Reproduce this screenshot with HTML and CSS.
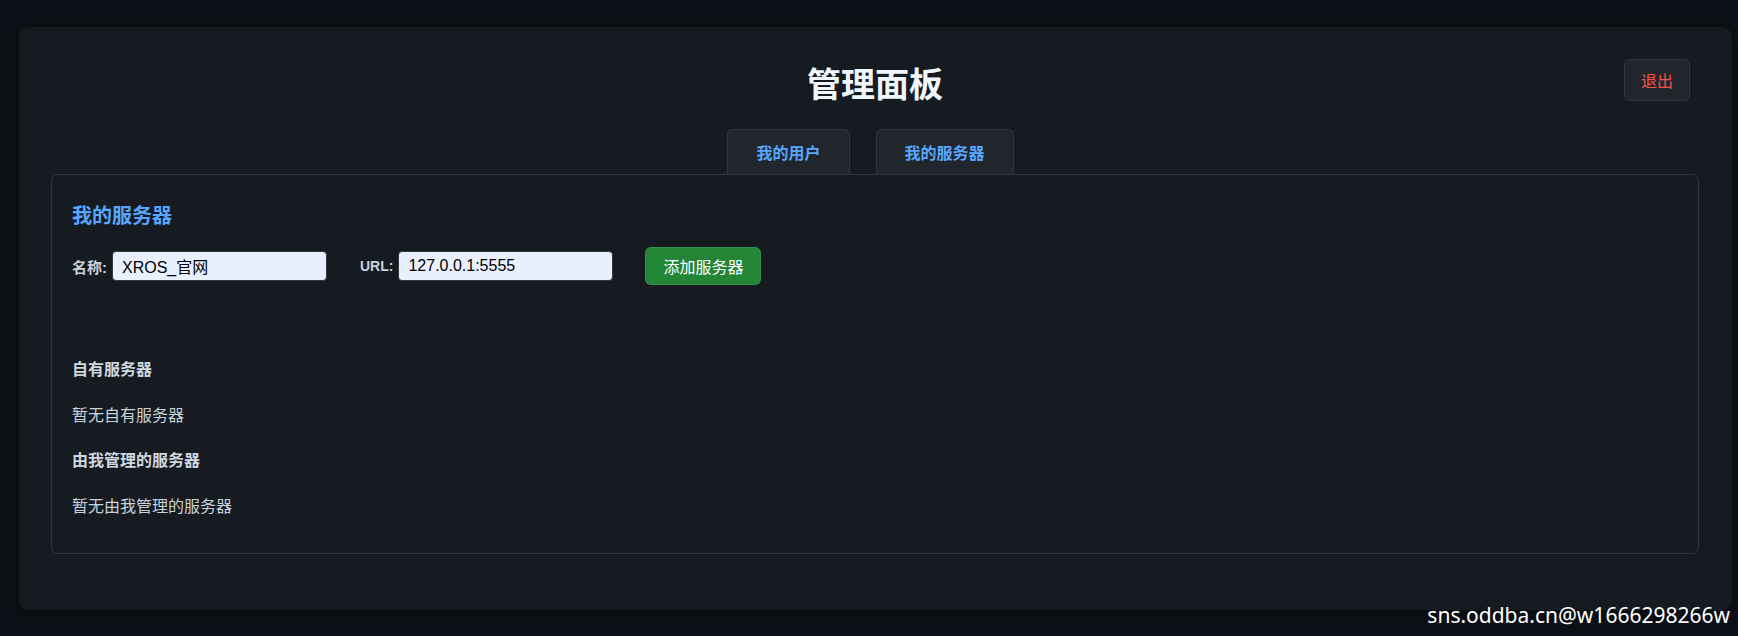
FILE: index.html
```html
<!DOCTYPE html>
<html lang="zh-CN">
<head>
<meta charset="utf-8">
<title>管理面板</title>
<link rel="stylesheet" href="styles.css">
</head>
<body>
<div class="card">
  <header class="header">
    <div class="spacer"></div>
    <h1 class="title">管理面板</h1>
    <button class="logout">退出</button>
  </header>
  <nav class="tabs">
    <button class="tab">我的用户</button>
    <button class="tab">我的服务器</button>
  </nav>
  <section class="panel">
    <h3 class="panel-title">我的服务器</h3>
    <div class="form-row">
      <label class="field"><span class="label">名称:</span><input class="input" value="XROS_官网"></label>
      <label class="field"><span class="label label-latin">URL:</span><input class="input" value="127.0.0.1:5555"></label>
      <button class="add-btn">添加服务器</button>
    </div>
    <div class="subhead first">自有服务器</div>
    <p class="empty">暂无自有服务器</p>
    <div class="subhead">由我管理的服务器</div>
    <p class="empty">暂无由我管理的服务器</p>
  </section>
</div>
<div class="watermark">sns.oddba.cn@w1666298266w</div>
</body>
</html>
```
FILE: styles.css
```css
html, body {
  margin: 0;
  padding: 0;
}
body {
  background: #0d1117;
  font-family: "Liberation Sans", "Noto Sans CJK SC", sans-serif;
  color: #c9d1d9;
  padding-top: 27px;
  height: 636px;
  box-sizing: border-box;
  overflow: hidden;
}
.card {
  margin: 0 6px 0 19px;
  padding: 32px 33px 56px 32px;
  background: #161b22;
  border-radius: 10px;
  box-shadow: 0 4px 16px rgba(0, 0, 0, 0.35);
}
.header {
  display: grid;
  grid-template-columns: 1fr auto 1fr;
  align-items: start;
  height: 42px;
}
.title {
  margin: 3px 0 0 0;
  font-size: 34px;
  line-height: 42px;
  font-weight: 700;
  color: #f0f6fc;
  font-family: "Noto Sans CJK SC", sans-serif;
}
.logout {
  justify-self: end;
  margin-right: 9px;
  height: 42px;
  padding: 0 16px;
  background: #21262d;
  border: 1px solid #30363d;
  border-radius: 6px;
  color: #f85149;
  font-size: 16px;
  font-family: "Noto Sans CJK SC", sans-serif;
  line-height: 40px;
}
.tabs {
  display: flex;
  justify-content: center;
  gap: 26px;
  margin-top: 28px;
  padding-right: 9px;
}
.tab {
  height: 45px;
  padding: 0 28px;
  background: #21262d;
  border: 1px solid #30363d;
  border-bottom: none;
  border-radius: 6px 6px 0 0;
  color: #58a6ff;
  font-size: 16px;
  font-weight: 700;
  font-family: "Noto Sans CJK SC", sans-serif;
  line-height: 44px;
}
.panel {
  border: 1px solid #30363d;
  border-radius: 6px;
  padding: 27px 20px 34px 20px;
}
.panel-title {
  margin: 0;
  font-size: 20px;
  line-height: 28px;
  font-weight: 700;
  color: #58a6ff;
}
.form-row {
  display: flex;
  align-items: center;
  height: 38px;
  margin-top: 17px;
}
.field {
  display: flex;
  align-items: center;
  gap: 5px;
  margin-right: 33px;
}
.label {
  font-size: 15px;
  font-weight: 700;
  color: #c9d1d9;
}
.label-latin {
  font-size: 14px;
}
.input {
  width: 215px;
  height: 30px;
  box-sizing: border-box;
  padding: 0 9px;
  background: #e8f0fe;
  border: 1px solid #30363d;
  border-radius: 4px;
  color: #000;
  font-size: 16px;
  font-family: "Liberation Sans", "Noto Sans CJK SC", sans-serif;
}
.add-btn {
  height: 38px;
  padding: 0 17px;
  margin-left: -1px;
  background: #238636;
  border: 1px solid rgba(240, 246, 252, 0.1);
  border-radius: 6px;
  color: #fff;
  font-size: 16px;
  font-family: "Noto Sans CJK SC", sans-serif;
}
.subhead {
  margin-top: 21px;
  font-size: 16px;
  line-height: 24px;
  font-weight: 700;
  color: #d0d7de;
}
.subhead.first {
  margin-top: 73px;
}
.empty {
  margin: 22px 0 0 0;
  font-size: 16px;
  line-height: 24px;
  color: #c9d1d9;
}
.watermark {
  position: absolute;
  top: 605px;
  right: 8px;
  font-family: "Noto Sans", sans-serif;
  font-size: 21px;
  line-height: 21px;
  color: #fff;
}
```
